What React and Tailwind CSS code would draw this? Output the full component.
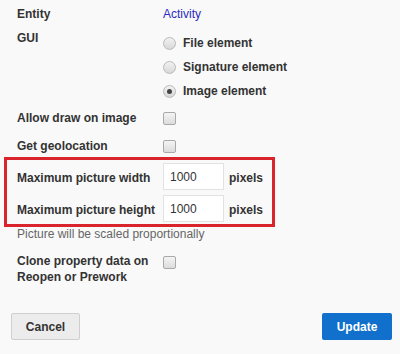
const Radio = ({ checked }) => (
  <span className="w-[13px] h-[13px] rounded-full border border-[#b9b9b9] bg-gradient-to-b from-[#f2f2f2] to-[#d8d8d8] flex items-center justify-center shrink-0">
    {checked && <span className="w-[5px] h-[5px] rounded-full bg-[#444]" />}
  </span>
);

const Checkbox = () => (
  <span className="block w-[13px] h-[13px] rounded-[2px] border border-[#a9a9a9] bg-gradient-to-b from-[#f4f4f4] to-[#dcdcdc]" />
);

const Label = ({ children, className = '' }) => (
  <div className={`w-[146px] shrink-0 font-bold text-[12px] text-[#333] whitespace-nowrap ${className}`}>{children}</div>
);

const App = () => {
  return (
    <div
      className="w-[400px] h-[354px] bg-[#f9f9f9] text-[#333] overflow-hidden"
      style={{ fontFamily: '"Liberation Sans", Arial, sans-serif' }}
    >
      <div className="pl-[17px] pt-[6px]">
        <div className="flex items-center h-[16px]">
          <Label>Entity</Label>
          <span className="text-[12px] text-[#2b2bc0]">Activity</span>
        </div>

        <div className="flex mt-[8px]">
          <Label className="leading-[16px]">GUI</Label>
          <div className="flex flex-col gap-[8px] pt-[5px]">
            {['File element', 'Signature element', 'Image element'].map((t, i) => (
              <div key={t} className="flex items-center h-[16px]">
                <Radio checked={i === 2} />
                <span className="ml-[7px] font-bold text-[12px]">{t}</span>
              </div>
            ))}
          </div>
        </div>
      </div>
      <div className="pl-[17px]">
        <div className="flex items-center h-[16px] mt-[11px]">
          <Label>Allow draw on image</Label>
          <Checkbox />
        </div>
        <div className="flex items-center h-[16px] mt-[12px]">
          <Label>Get geolocation</Label>
          <Checkbox />
        </div>
      </div>

      <div className="ml-[4px] mt-[3px] w-[271px] h-[70px] border-[3px] border-[#d9232d] pl-[10px] pt-[3px] flex flex-col gap-[5px]">
        {['Maximum picture width', 'Maximum picture height'].map((t) => (
          <div key={t} className="flex items-center">
            <Label className="pt-[2px]">{t}</Label>
            <div className="w-[61px] h-[27px] bg-white border border-[#e2e2e2] flex items-center pl-[6px] text-[12px] text-[#333]">
              1000
            </div>
            <span className="ml-[5px] font-bold text-[12px] pt-[2px]">pixels</span>
          </div>
        ))}
      </div>

      <div className="pl-[17px]">
        <div className="text-[12px] text-[#666] leading-[14px]">Picture will be scaled proportionally</div>
        <div className="flex items-start mt-[12px]">
          <Label className="leading-[16px]">
            Clone property data on
            <br />
            Reopen or Prework
          </Label>
          <span className="mt-[3px]">
            <Checkbox />
          </span>
        </div>
      </div>

      <div className="flex justify-between pr-[8px] pl-[11px] mt-[28px]">
        <button className="w-[69px] h-[27px] bg-[#ececec] border border-[#cfcfcf] rounded-[2px] font-bold text-[12px] text-[#333]">
          Cancel
        </button>
        <button className="w-[70px] h-[27px] bg-[#1070cc] rounded-[2px] font-bold text-[12px] text-white">
          Update
        </button>
      </div>
    </div>
  );
};

export default App;
